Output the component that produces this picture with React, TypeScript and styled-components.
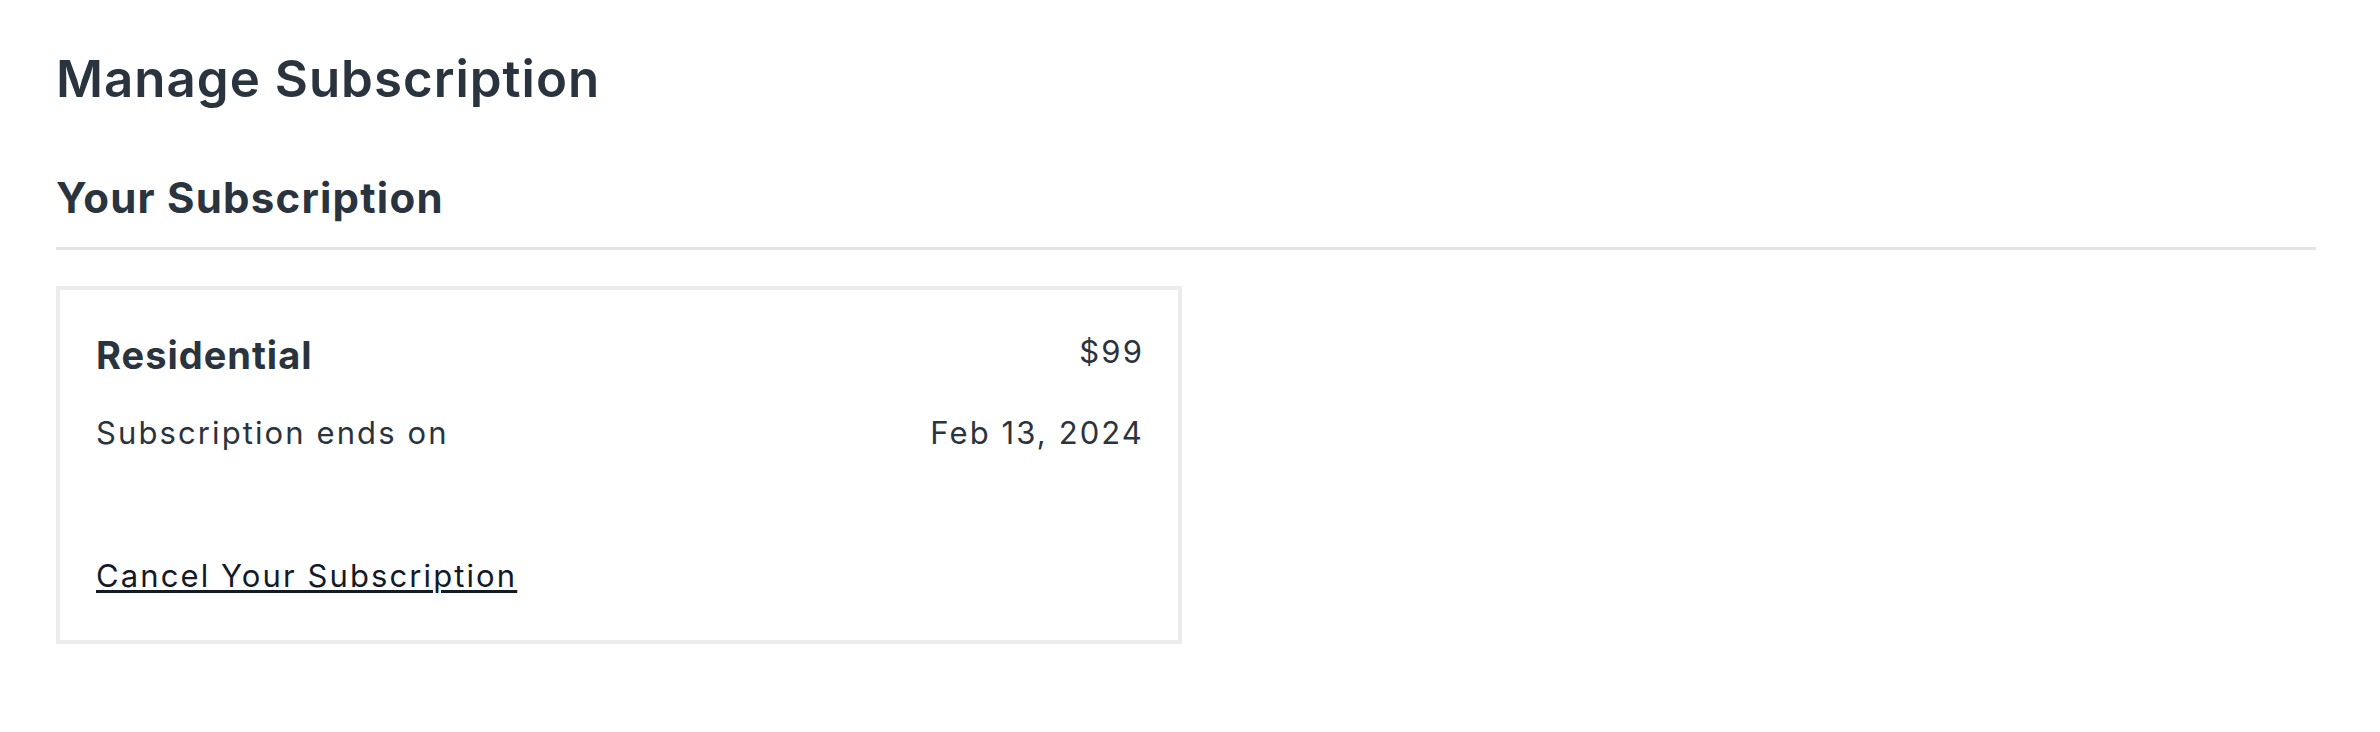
import React from "react";
import styled, { createGlobalStyle } from "styled-components";

const GlobalStyle = createGlobalStyle`
  html, body {
    margin: 0;
    padding: 0;
    background: #ffffff;
  }
  body {
    font-family: Inter, "Noto Sans", "Liberation Sans", sans-serif;
    color: #2a343e;
  }
`;

const Page = styled.main`
  padding: 53px 64px 40px 56px;
  display: flex;
  flex-direction: column;
`;

const Title = styled.h1`
  margin: 0;
  font-size: 51px;
  line-height: 1;
  font-weight: 600;
  letter-spacing: 1px;
  color: #2a343e;
`;

const SectionHeader = styled.div`
  margin-top: 73px;
  padding-bottom: 28px;
  border-bottom: 3px solid #e4e4e4;
`;

const SectionTitle = styled.h2`
  margin: 0;
  font-size: 42px;
  line-height: 1;
  font-weight: 700;
  letter-spacing: 1.2px;
  color: #2a343e;
`;

const Card = styled.section`
  margin-top: 36px;
  width: 1126px;
  box-sizing: border-box;
  border: 4px solid #ececec;
  padding: 46px 34px 49px 36px;
  display: flex;
  flex-direction: column;
`;

const Row = styled.div<{ $gap?: number }>`
  display: flex;
  justify-content: space-between;
  align-items: flex-start;
  margin-top: ${(p) => p.$gap ?? 0}px;
`;

const PlanName = styled.span`
  font-size: 38px;
  line-height: 1;
  font-weight: 700;
  letter-spacing: 1px;
  color: #2a343e;
`;

const Text = styled.span`
  font-size: 31px;
  line-height: 1;
  font-weight: 400;
  letter-spacing: 2.1px;
  color: #2a343e;
`;

const CancelLink = styled.a`
  margin-top: 112px;
  align-self: flex-start;
  font-size: 31px;
  line-height: 1;
  font-weight: 400;
  letter-spacing: 2.1px;
  color: #131a28;
  text-decoration: underline;
  text-decoration-thickness: 3px;
  text-underline-offset: 3px;
  cursor: pointer;
`;

export default function App() {
  return (
    <>
      <GlobalStyle />
      <Page>
        <Title>Manage Subscription</Title>
        <SectionHeader>
          <SectionTitle>Your Subscription</SectionTitle>
        </SectionHeader>
        <Card>
          <Row>
            <PlanName>Residential</PlanName>
            <Text>$99</Text>
          </Row>
          <Row $gap={43}>
            <Text>Subscription ends on</Text>
            <Text>Feb 13, 2024</Text>
          </Row>
          <CancelLink href="#" onClick={(e) => e.preventDefault()}>
            Cancel Your Subscription
          </CancelLink>
        </Card>
      </Page>
    </>
  );
}
